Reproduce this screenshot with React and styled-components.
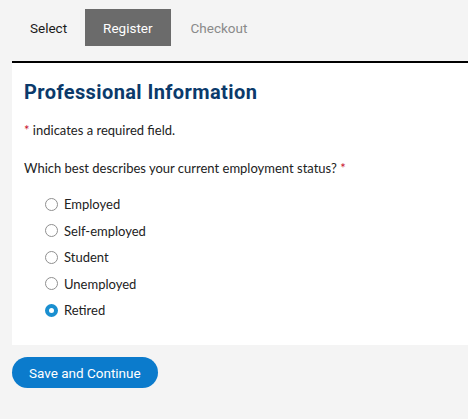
import React from 'react'
import styled, { createGlobalStyle } from 'styled-components'

const GlobalStyle = createGlobalStyle`
    html, body {
        margin: 0;
        padding: 0;
        background: #f4f4f4;
    }
    * {
        box-sizing: border-box;
    }
`

const options = ['Employed', 'Self-employed', 'Student', 'Unemployed', 'Retired']

function App() {
    const selected = 'Retired'
    return (
        <Page>
            <GlobalStyle />
            <Steps>
                <Step>Select</Step>
                <Step active>Register</Step>
                <Step muted>Checkout</Step>
            </Steps>
            <Card>
                <Title>Professional Information</Title>
                <Note><Star>*</Star> indicates a required field.</Note>
                <Question>Which best describes your current employment status? <Star>*</Star></Question>
                <Options>
                    {options.map((opt) => (
                        <Option key={opt}>
                            <Radio checked={opt === selected} />
                            <span>{opt}</span>
                        </Option>
                    ))}
                </Options>
            </Card>
            <Actions>
                <Button>Save and Continue</Button>
            </Actions>
        </Page>
    )
}

const Page = styled.div`
    width: 468px;
    min-height: 419px;
    background: #f4f4f4;
    padding-top: 9px;
`

const Steps = styled.div`
    display: flex;
    align-items: center;
    padding-left: 18px;
    height: 37px;
    margin-bottom: 15px;
`

const Step = styled.div`
    height: 37px;
    display: flex;
    align-items: center;
    padding: 0 ${(p) => (p.active ? '18px' : '12px')};
    margin-right: ${(p) => (p.active ? '8px' : '6px')};
    font-family: Roboto, "Liberation Sans", sans-serif;
    font-size: 13.5px;
    background: ${(p) => (p.active ? '#6b6b6b' : 'transparent')};
    color: ${(p) => (p.active ? '#ffffff' : p.muted ? '#8a8a8a' : '#1a1a1a')};
`

const Card = styled.div`
    margin-left: 12px;
    background: #ffffff;
    border-top: 2px solid #000000;
    padding: 17px 12px 22px;
    min-height: 284px;
`

const Title = styled.h2`
    margin: 0 0 18px;
    font-family: Roboto, "Liberation Sans", sans-serif;
    font-weight: 700;
    font-size: 20px;
    letter-spacing: 0.4px;
    color: #0b3a6b;
`

const Note = styled.p`
    margin: 0 0 22px;
    font-family: Lato, "Liberation Sans", sans-serif;
    font-size: 13px;
    color: #222222;
`

const Star = styled.span`
    color: #c8102e;
`

const Question = styled(Note)`
    margin-bottom: 20px;
`

const Options = styled.div`
    display: flex;
    flex-direction: column;
    gap: 10px;
    padding-left: 21px;
`

const Option = styled.label`
    display: flex;
    align-items: center;
    gap: 6px;
    font-family: Lato, "Liberation Sans", sans-serif;
    font-size: 13px;
    color: #222222;
    height: 16.5px;
`

const Radio = styled.span`
    width: 13px;
    height: 13px;
    border-radius: 50%;
    border: ${(p) => (p.checked ? '4px solid #1a8fd0' : '1px solid #8f8f8f')};
    background: #ffffff;
    flex-shrink: 0;
`

const Actions = styled.div`
    padding: 12px 0 0 12px;
`

const Button = styled.button`
    height: 31px;
    padding: 0 17px;
    border: none;
    border-radius: 16px;
    background: #0b7bcc;
    color: #ffffff;
    font-family: Roboto, "Liberation Sans", sans-serif;
    font-size: 13.5px;
    cursor: pointer;
`

export default App
